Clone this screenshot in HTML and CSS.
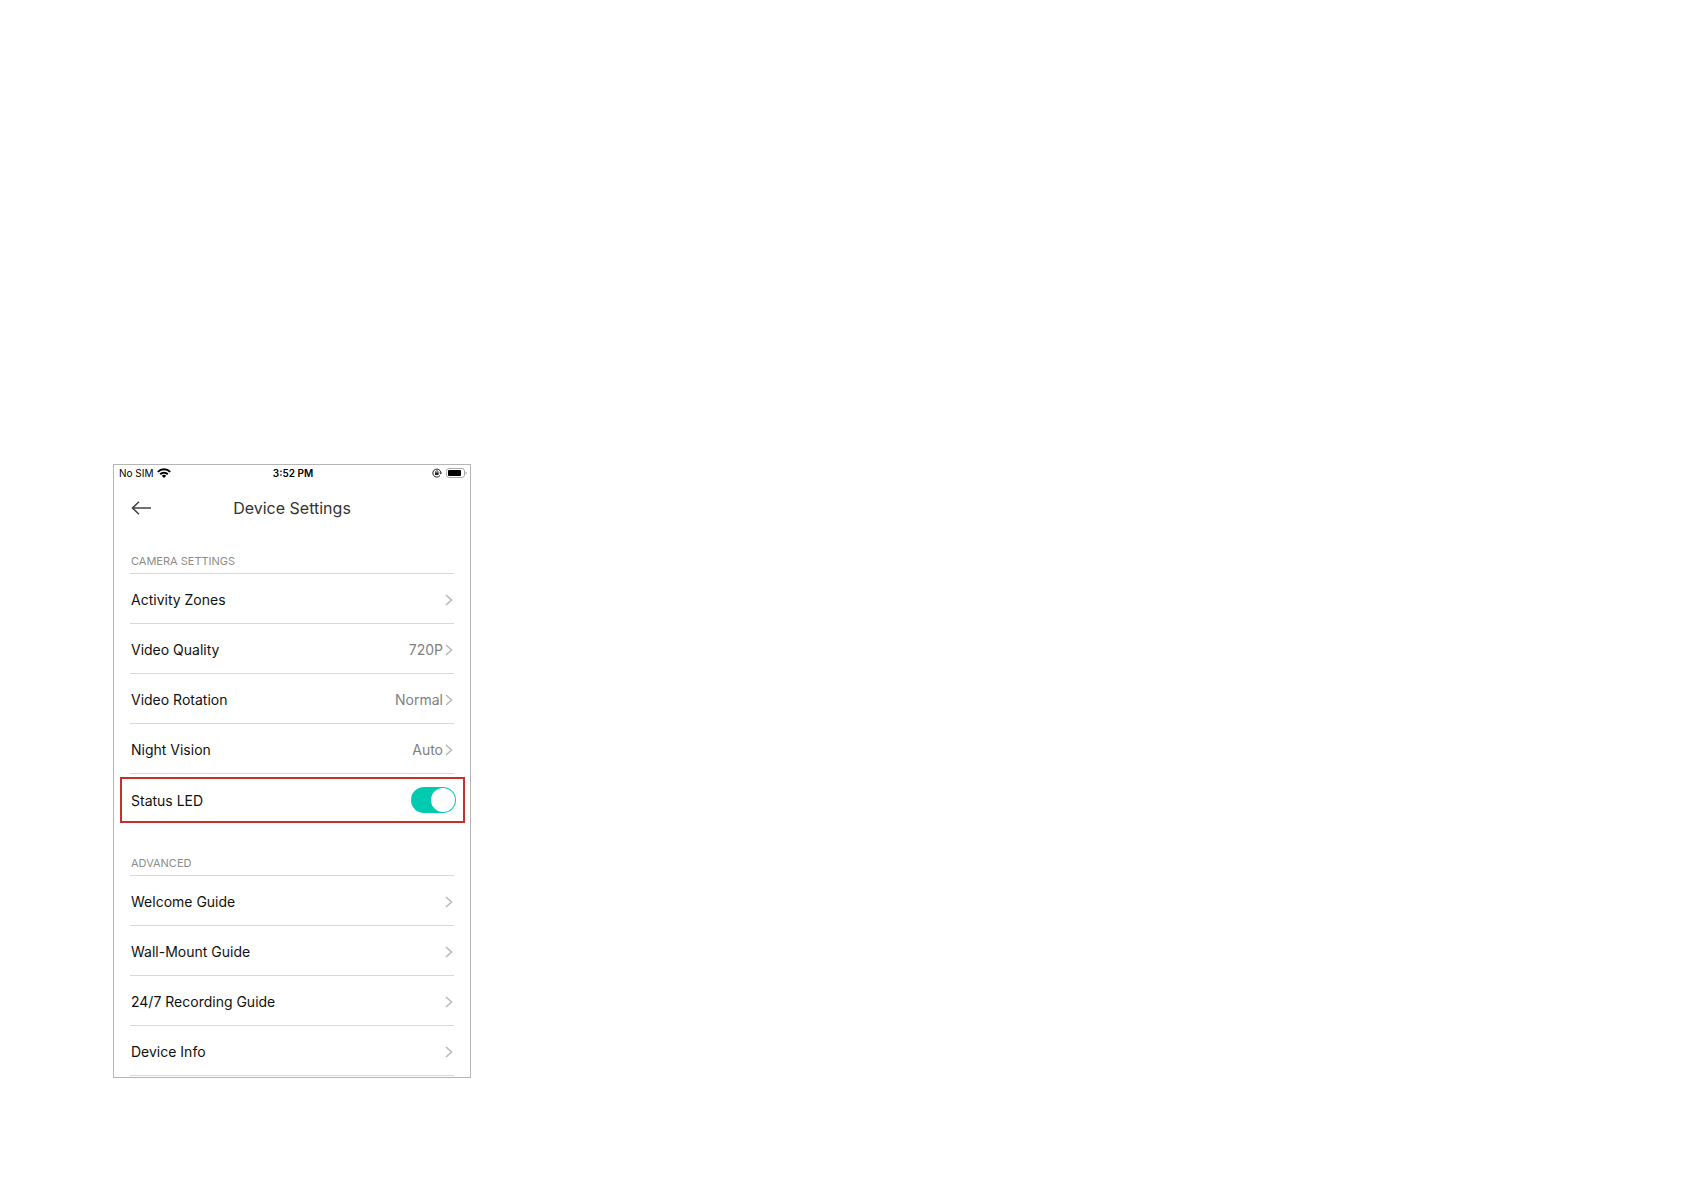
FILE: index.html
```html
<!DOCTYPE html>
<html lang="en">
<head>
  <meta charset="UTF-8">
  <meta name="viewport" content="width=device-width, initial-scale=1.0">
  <title>Device Settings</title>
  <link rel="stylesheet" href="styles.css">
</head>
<body>
  <main class="phone">
    <!-- Status bar -->
    <div class="status-bar">
      <div class="status-left">
        <span>No SIM</span>
        <svg viewBox="0 0 14 10" width="14" height="10" fill="none" stroke="#000" stroke-width="2">
          <path d="M.8 3.900a8.800 8.800 0 0 1 12.400 0"/>
          <path d="M3.200 6.300a5.400 5.400 0 0 1 7.600 0"/>
          <path d="M7 10 4.800 7.800a3.100 3.100 0 0 1 4.400 0z" fill="#000" stroke="none"/>
        </svg>
      </div>
      <span class="time">3:52 PM</span>
      <div class="status-right">
        <svg viewBox="0 0 10 10" width="10" height="10" fill="none" stroke="#222">
          <path d="M8 7.500A4 4 0 1 1 8.800 4.600"/>
          <path d="M7.300 4.400h2.700L8.700 6.400z" fill="#222" stroke="none"/>
          <path d="M3.700 4.600V3.800a1.100 1.100 0 0 1 2.200 0v.8" stroke-width=".8"/>
          <rect x="3" y="4.400" width="3.600" height="2.600" fill="#222" stroke="none"/>
        </svg>
        <svg viewBox="0 0 21 10" width="21" height="10">
          <rect x=".5" y=".5" width="18" height="9" rx="2.500" fill="#fff" stroke="#aaa"/>
          <rect x="2" y="2" width="13" height="6" rx="1" fill="#000"/>
          <path d="M19.500 3.500v3q1.300-.5 1.300-1.500t-1.300-1.500z" fill="#aaa"/>
        </svg>
      </div>
    </div>

    <!-- Title bar -->
    <header class="title-bar">
      <button class="back" type="button" aria-label="Back">
        <svg viewBox="0 0 20 14" width="20" height="14" fill="none" stroke="#444" stroke-width="1.600">
          <path d="M20 7H1.500M8 .7 1.500 7 8 13.300"/>
        </svg>
      </button>
      <h1>Device Settings</h1>
    </header>

    <!-- Camera settings -->
    <section>
      <h2>CAMERA SETTINGS</h2>
      <a class="row" href="#zones">
        <span>Activity Zones</span>
        <svg class="chevron" viewBox="0 0 8 12"><path d="M1 1l5.500 5L1 11"/></svg>
      </a>
      <a class="row" href="#quality">
        <span>Video Quality</span>
        <span class="value">720P</span>
        <svg class="chevron" viewBox="0 0 8 12"><path d="M1 1l5.500 5L1 11"/></svg>
      </a>
      <a class="row" href="#rotation">
        <span>Video Rotation</span>
        <span class="value">Normal</span>
        <svg class="chevron" viewBox="0 0 8 12"><path d="M1 1l5.500 5L1 11"/></svg>
      </a>
      <a class="row" href="#night">
        <span>Night Vision</span>
        <span class="value">Auto</span>
        <svg class="chevron" viewBox="0 0 8 12"><path d="M1 1l5.500 5L1 11"/></svg>
      </a>
      <div class="highlight">
        <label for="statusLed">Status LED</label>
        <input class="toggle" type="checkbox" id="statusLed" checked>
      </div>
    </section>

    <!-- Advanced -->
    <section>
      <h2>ADVANCED</h2>
      <a class="row" href="#welcome">
        <span>Welcome Guide</span>
        <svg class="chevron" viewBox="0 0 8 12"><path d="M1 1l5.500 5L1 11"/></svg>
      </a>
      <a class="row" href="#mount">
        <span>Wall-Mount Guide</span>
        <svg class="chevron" viewBox="0 0 8 12"><path d="M1 1l5.500 5L1 11"/></svg>
      </a>
      <a class="row" href="#recording">
        <span>24/7 Recording Guide</span>
        <svg class="chevron" viewBox="0 0 8 12"><path d="M1 1l5.500 5L1 11"/></svg>
      </a>
      <a class="row" href="#info">
        <span>Device Info</span>
        <svg class="chevron" viewBox="0 0 8 12"><path d="M1 1l5.500 5L1 11"/></svg>
      </a>
    </section>
  </main>
</body>
</html>
```

FILE: styles.css
```css
* {
  box-sizing: border-box;
}

body {
  margin: 0;
  padding: 464px 113px 113px;
  background: #fff;
  color: #111;
  font-family: Inter, "Liberation Sans", sans-serif;
  font-size: 14px;
}

.phone {
  max-width: 358px;
  padding-bottom: 1px;
  border: 1px solid #b5b5b5;
}

/* Status bar */
.status-bar {
  display: grid;
  grid-template-columns: 1fr auto 1fr;
  align-items: center;
  height: 16px;
  padding: 0 3px 0 5px;
  color: #000;
  font-size: 10px;
}

.status-left,
.status-right {
  display: flex;
  align-items: center;
  gap: 4px;
}

.status-right {
  justify-content: flex-end;
}

.time {
  font-weight: 600;
}

/* Title bar */
.title-bar {
  display: grid;
  grid-template-columns: 20px 1fr 20px;
  align-items: center;
  height: 53px;
  padding: 0 17px;
}

.back {
  display: flex;
  padding: 0;
  border: none;
  background: none;
  cursor: pointer;
}

h1 {
  margin: 0;
  color: #333;
  font-size: 16px;
  font-weight: 400;
  text-align: center;
}

/* Setting lists */
section {
  padding: 0 16px;
}

section + section {
  padding-top: 13px;
}

h2 {
  display: flex;
  align-items: flex-end;
  height: 40px;
  margin: 0;
  padding: 0 1px 4px;
  border-bottom: 1px solid #d8d8d8;
  color: #8c8c8c;
  font-size: 11px;
  font-weight: 400;
  line-height: 16px;
}

.row {
  display: flex;
  align-items: center;
  gap: 2px;
  height: 50px;
  padding: 2px 1px 0;
  border-bottom: 1px solid #d8d8d8;
  color: inherit;
  text-decoration: none;
}

.row span:first-child {
  flex: 1;
}

.value {
  color: #808080;
}

.chevron {
  width: 8px;
  height: 12px;
  fill: none;
  stroke: #b8b8b8;
  stroke-width: 1.5;
}

/* Red frame around the LED switch */
.highlight {
  display: flex;
  align-items: center;
  justify-content: space-between;
  height: 46px;
  margin: 3px -11px 0 -10px;
  padding: 0 7px 0 9px;
  border: 2px solid #c4302b;
}

.toggle {
  appearance: none;
  display: flex;
  justify-content: flex-end;
  width: 45px;
  height: 26px;
  margin: 0;
  padding: 1px;
  border-radius: 13px;
  background: #00cbb0;
  cursor: pointer;
}

.toggle:not(:checked) {
  justify-content: flex-start;
  background: #ccc;
}

.toggle::before {
  content: "";
  width: 24px;
  height: 24px;
  border-radius: 50%;
  background: #fff;
}
```
